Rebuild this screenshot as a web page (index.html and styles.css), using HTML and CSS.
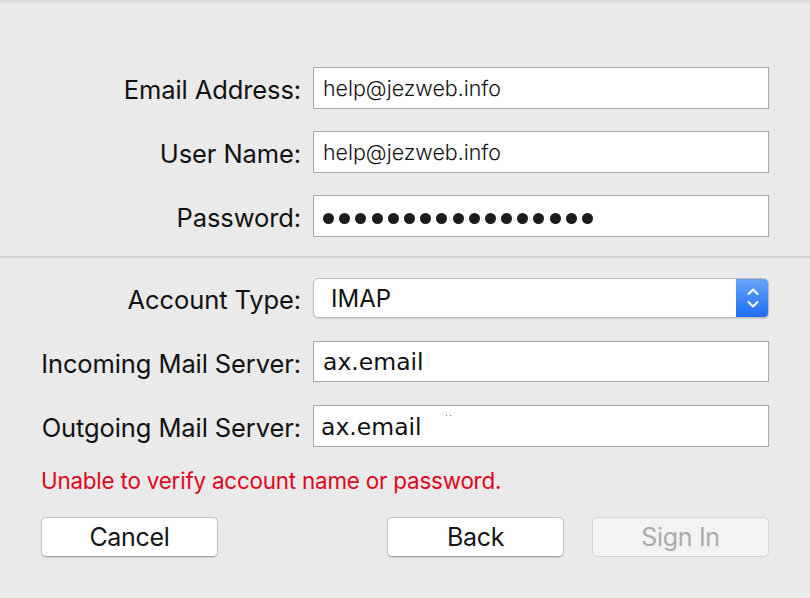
FILE: index.html
```html
<!DOCTYPE html>
<html lang="en">
<head>
<meta charset="utf-8">
<title>Mail account</title>
<link rel="stylesheet" href="styles.css">
</head>
<body>
<div class="topbar"></div>
<main class="sheet">
  <section class="form form-account">
    <label class="label">Email Address:</label>
    <div class="field"><span class="value">help@jezweb.info</span></div>
    <label class="label">User Name:</label>
    <div class="field"><span class="value">help@jezweb.info</span></div>
    <label class="label">Password:</label>
    <div class="field field-password" aria-label="password">
      <span class="dot"></span><span class="dot"></span><span class="dot"></span><span class="dot"></span><span class="dot"></span><span class="dot"></span><span class="dot"></span><span class="dot"></span><span class="dot"></span><span class="dot"></span><span class="dot"></span><span class="dot"></span><span class="dot"></span><span class="dot"></span><span class="dot"></span><span class="dot"></span><span class="dot"></span>
    </div>
  </section>
  <hr class="separator">
  <section class="form form-server">
    <label class="label">Account Type:</label>
    <div class="popup">
      <span class="popup-value">IMAP</span>
      <span class="stepper">
        <svg width="14" height="24" viewBox="0 0 14 24" aria-hidden="true">
          <path d="M2.5 8 L7 3.5 L11.5 8" fill="none" stroke="#fff" stroke-width="2" stroke-linecap="round" stroke-linejoin="round"/>
          <path d="M2.5 16 L7 20.5 L11.5 16" fill="none" stroke="#fff" stroke-width="2" stroke-linecap="round" stroke-linejoin="round"/>
        </svg>
      </span>
    </div>
    <label class="label">Incoming Mail Server:</label>
    <div class="field"><span class="value value-server">ax.email</span></div>
    <label class="label">Outgoing Mail Server:</label>
    <div class="field"><span class="value value-server value-out">ax.email</span><span class="speck"></span></div>
  </section>
  <p class="error">Unable to verify account name or password.</p>
  <div class="actions">
    <button class="btn">Cancel</button>
    <div class="actions-right">
      <button class="btn">Back</button>
      <button class="btn btn-disabled" disabled>Sign In</button>
    </div>
  </div>
</main>
</body>
</html>
```

FILE: styles.css
```css
html, body {
  margin: 0;
  padding: 0;
  background: #eaeaea;
  width: 810px;
  height: 598px;
  overflow: hidden;
  font-family: Inter, "Liberation Sans", sans-serif;
  color: #1b1b1b;
}

.topbar {
  height: 3px;
  background: #dedede;
}

.sheet {
  padding-top: 64px;
}

.form {
  display: grid;
  grid-template-columns: 301px 456px;
  column-gap: 12px;
  row-gap: 22px;
}

.form-server {
  row-gap: 23px;
}

.label {
  justify-self: end;
  align-self: center;
  font-size: 25.5px;
  letter-spacing: -0.1px;
  white-space: nowrap;
  color: #111;
  padding-top: 3px;
}

.field {
  position: relative;
  height: 42px;
  box-sizing: border-box;
  background: #fff;
  border: 1px solid #a8a8a8;
  display: flex;
  align-items: center;
  padding-left: 9px;
}

.value {
  font-size: 21.4px;
  font-weight: 300;
  color: #111;
}

.value-server {
  font-family: "DejaVu Sans", sans-serif;
  font-weight: 400;
  font-size: 23.5px;
}

.value-out {
  margin-left: -2px;
  padding-top: 2px;
}

.speck {
  position: absolute;
  left: 132px;
  top: 9px;
  width: 5px;
  height: 1px;
  border-left: 1px solid #777;
  border-right: 1px solid #777;
  box-sizing: border-box;
}

.field-password {
  gap: 5.2px;
  padding-top: 4px;
}

.dot {
  width: 11px;
  height: 11px;
  border-radius: 50%;
  background: #1c1c1c;
}

.separator {
  margin: 19px 0 20px;
  border: 0;
  height: 2px;
  background: #d3d3d3;
}

.popup {
  height: 40px;
  box-sizing: border-box;
  background: #fff;
  border: 1px solid #bdbdbd;
  border-radius: 5px;
  box-shadow: 0 1px 1px rgba(0,0,0,0.12);
  display: flex;
  align-items: center;
  overflow: hidden;
}

.popup-value {
  flex: 1;
  padding-left: 17px;
  font-size: 24px;
  color: #111;
}

.stepper {
  width: 33px;
  align-self: stretch;
  margin: -1px -1px -1px 0;
  background: linear-gradient(#69a6fa, #1c6cf4);
  display: flex;
  align-items: center;
  justify-content: center;
}

.form-server .field:nth-of-type(2) {
  height: 41px;
}

.error {
  margin: 21px 0 0 41px;
  font-size: 22.4px;
  letter-spacing: -0.2px;
  color: #e0061b;
  line-height: 26px;
}

.actions {
  margin-top: 23px;
  padding: 0 41px 0 41px;
  display: flex;
  justify-content: space-between;
}

.actions-right {
  display: flex;
  gap: 28px;
}

.btn {
  width: 177px;
  height: 40px;
  box-sizing: border-box;
  background: #fff;
  border: 1px solid #c2c2c2;
  border-bottom-color: #a5a5a5;
  border-radius: 5px;
  box-shadow: 0 1px 1px rgba(0,0,0,0.1);
  font-family: Inter, "Liberation Sans", sans-serif;
  font-size: 25px;
  letter-spacing: -0.3px;
  color: #161616;
  padding: 0;
}

.btn-disabled {
  background: #f3f3f3;
  border-color: #d6d6d6;
  box-shadow: none;
  color: #ababab;
}
```
